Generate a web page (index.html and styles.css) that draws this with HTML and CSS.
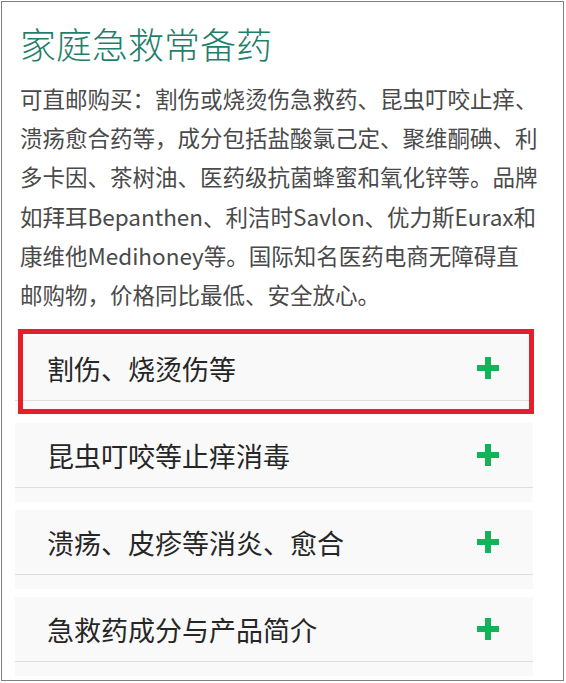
FILE: index.html
```html
<!DOCTYPE html>
<html lang="zh-CN">
<head>
<meta charset="utf-8">
<title>家庭急救常备药</title>
<link rel="stylesheet" href="styles.css">
</head>
<body>
<div class="frame">
  <section class="intro">
    <h1 class="title">家庭急救常备药</h1>
    <p class="desc">可直邮购买：割伤或烧烫伤急救药、昆虫叮咬止痒、<br>溃疡愈合药等，成分包括盐酸氯己定、聚维酮碘、利<br>多卡因、茶树油、医药级抗菌蜂蜜和氧化锌等。品牌<br>如拜耳Bepanthen、利洁时Savlon、优力斯Eurax和<br>康维他Medihoney等。国际知名医药电商无障碍直<br>邮购物，价格同比最低、安全放心。</p>
  </section>
  <div class="accordion">
    <div class="item">
      <div class="head"><span class="label">割伤、烧烫伤等</span><span class="plus"></span></div>
      <div class="mark"></div>
    </div>
    <div class="item">
      <div class="head"><span class="label">昆虫叮咬等止痒消毒</span><span class="plus"></span></div>
    </div>
    <div class="item">
      <div class="head"><span class="label">溃疡、皮疹等消炎、愈合</span><span class="plus"></span></div>
    </div>
    <div class="item">
      <div class="head"><span class="label">急救药成分与产品简介</span><span class="plus"></span></div>
    </div>
  </div>
</div>
</body>
</html>
```
FILE: styles.css
```css
html, body {
  margin: 0;
  padding: 0;
  background: #fff;
}
body {
  font-family: "Noto Sans CJK SC", sans-serif;
}
.frame {
  box-sizing: border-box;
  width: 563px;
  height: 680px;
  margin: 1px 0 0 1px;
  border: 1px solid #808080;
  overflow: hidden;
}
.intro {
  padding: 17px 0 0 18px;
}
.title {
  margin: 0;
  font-size: 36px;
  line-height: 48px;
  font-weight: 300;
  color: #1f7f6a;
}
.desc {
  margin: 12px 0 0 0;
  white-space: nowrap;
  font-size: 22.5px;
  line-height: 39.2px;
  color: #4a4a4a;
}
.accordion {
  margin: 22px 0 0 13px;
  width: 518px;
  display: flex;
  flex-direction: column;
  gap: 8px;
}
.item {
  position: relative;
  background: #f9f9f9;
  padding-bottom: 14px;
}
.head {
  height: 64px;
  border-bottom: 1px solid #dddddd;
  display: flex;
  align-items: center;
  justify-content: space-between;
  padding: 0 34px 0 32px;
}
.label {
  font-size: 27px;
  color: #262626;
  line-height: 1;
}
.plus {
  position: relative;
  width: 22px;
  height: 22px;
}
.plus::before,
.plus::after {
  content: "";
  position: absolute;
  background: #12b45a;
}
.plus::before {
  left: 0;
  top: 8px;
  width: 22px;
  height: 6px;
}
.plus::after {
  left: 8px;
  top: 0;
  width: 6px;
  height: 22px;
}
.mark {
  position: absolute;
  top: -7px;
  left: 3px;
  width: 516px;
  height: 85px;
  box-sizing: border-box;
  border: 5px solid #e2202b;
}
```
